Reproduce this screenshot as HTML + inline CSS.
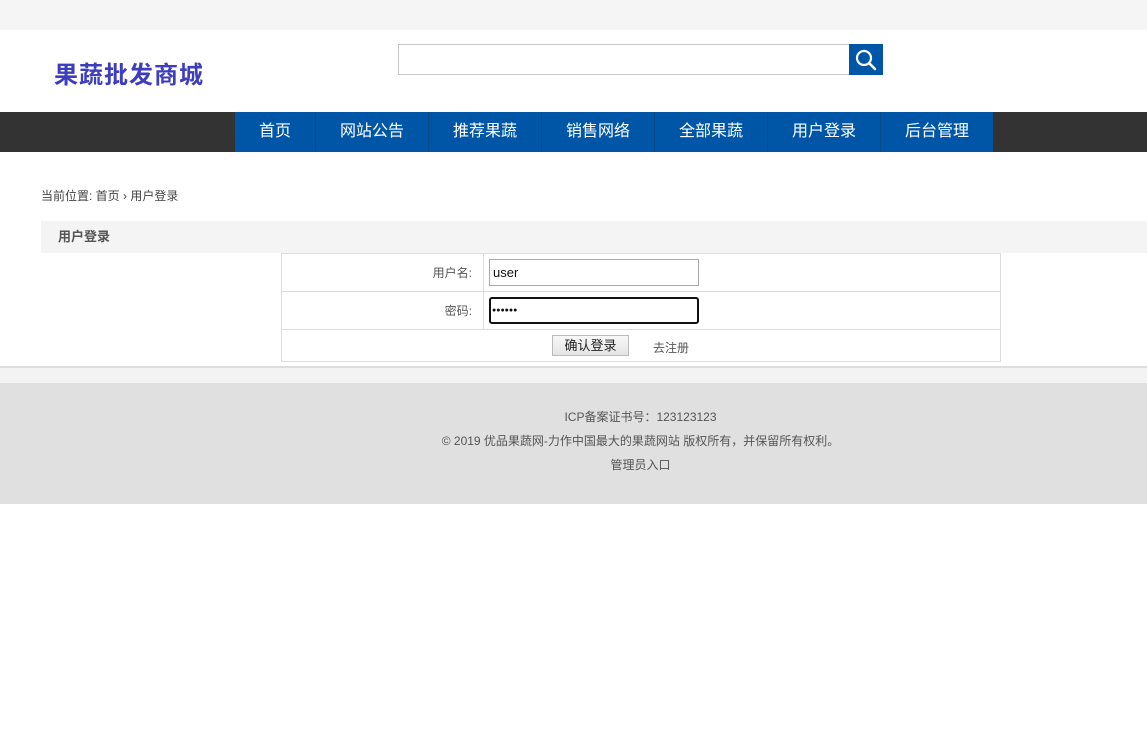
<!DOCTYPE html>
<html><head><meta charset="utf-8"><style>
*{margin:0;padding:0;box-sizing:border-box}
body{width:1147px;height:747px;background:#fff;font-family:"Liberation Sans","Noto Sans CJK SC",sans-serif;position:relative;overflow:hidden;color:#333}
.a{position:absolute}
.nav a{position:absolute;top:0;height:40px;line-height:40px;text-align:center;color:#fff;font-size:16px;background:#0056a6;border-left:1px solid #0a4a88}
</style></head><body>
<div class="a" style="left:0;top:0;width:1147px;height:30px;background:#f5f5f5"></div>
<div class="a" style="left:54px;top:55px;font-size:24px;font-weight:bold;color:#3d3dbe;letter-spacing:1px;font-family:'Noto Sans CJK SC',sans-serif">果蔬批发商城</div>
<div class="a" style="left:398px;top:44px;width:452px;height:31px;border:1px solid #c8c8c8"></div>
<div class="a" style="left:849px;top:44px;width:34px;height:31px;background:#0056a6">
<svg width="34" height="31"><circle cx="15" cy="14" r="7" fill="none" stroke="#fff" stroke-width="2.2"/><line x1="20" y1="19" x2="26" y2="25" stroke="#fff" stroke-width="2.6" stroke-linecap="round"/></svg></div>
<div class="a nav" style="left:0;top:112px;width:1147px;height:40px;background:#333">
<a style="left:235px;width:80px;border-left:none">首页</a>
<a style="left:315px;width:113px">网站公告</a>
<a style="left:428px;width:113px">推荐果蔬</a>
<a style="left:541px;width:113px">销售网络</a>
<a style="left:654px;width:113px">全部果蔬</a>
<a style="left:767px;width:113px">用户登录</a>
<a style="left:880px;width:113px">后台管理</a>
</div>
<div class="a" style="left:41px;top:187px;font-size:12px;color:#444">当前位置: 首页 › 用户登录</div>
<div class="a" style="left:41px;top:221px;width:1106px;height:32px;background:#f4f4f4;font-size:13px;font-weight:bold;color:#555;padding-left:17px;line-height:32px">用户登录</div>
<div class="a" style="left:281px;top:253px;width:720px;height:109px;border:1px solid #ddd"></div>
<div class="a" style="left:282px;top:291px;width:718px;height:1px;background:#ddd"></div>
<div class="a" style="left:282px;top:329px;width:718px;height:1px;background:#ddd"></div>
<div class="a" style="left:483px;top:254px;width:1px;height:75px;background:#ddd"></div>
<div class="a" style="left:380px;top:264px;width:92px;text-align:right;font-size:12px;color:#555">用户名:</div>
<div class="a" style="left:380px;top:302px;width:92px;text-align:right;font-size:12px;color:#555">密码:</div>
<div class="a" style="left:489px;top:259px;width:210px;height:27px;border:1px solid #aaa;font-size:13px;line-height:25px;padding-left:3px;color:#111">user</div>
<div class="a" style="left:489px;top:297px;width:210px;height:27px;border:2px solid #111;border-radius:3px;font-size:7px;line-height:23px;padding-left:1px;color:#111">●●●●●●</div>
<div class="a" style="left:552px;top:335px;width:77px;height:21px;border:1px solid #bbb;background:linear-gradient(#f8f8f8,#e4e4e4);font-size:13px;text-align:center;line-height:19px;color:#222">确认登录</div>
<div class="a" style="left:653px;top:339px;font-size:12px;color:#555">去注册</div>
<div class="a" style="left:0;top:366px;width:1147px;height:2px;background:#ddd"></div>
<div class="a" style="left:0;top:368px;width:1147px;height:15px;background:#f3f3f3"></div>
<div class="a" style="left:0;top:383px;width:1147px;height:121px;background:#e0e0e0;font-size:12px;color:#555;text-align:center">
<div style="position:absolute;left:0;width:1281px;top:25px">ICP备案证书号：123123123</div>
<div style="position:absolute;left:0;width:1281px;top:49px">© 2019 优品果蔬网-力作中国最大的果蔬网站 版权所有，并保留所有权利。</div>
<div style="position:absolute;left:0;width:1281px;top:73px">管理员入口</div>
</div>
</body></html>
